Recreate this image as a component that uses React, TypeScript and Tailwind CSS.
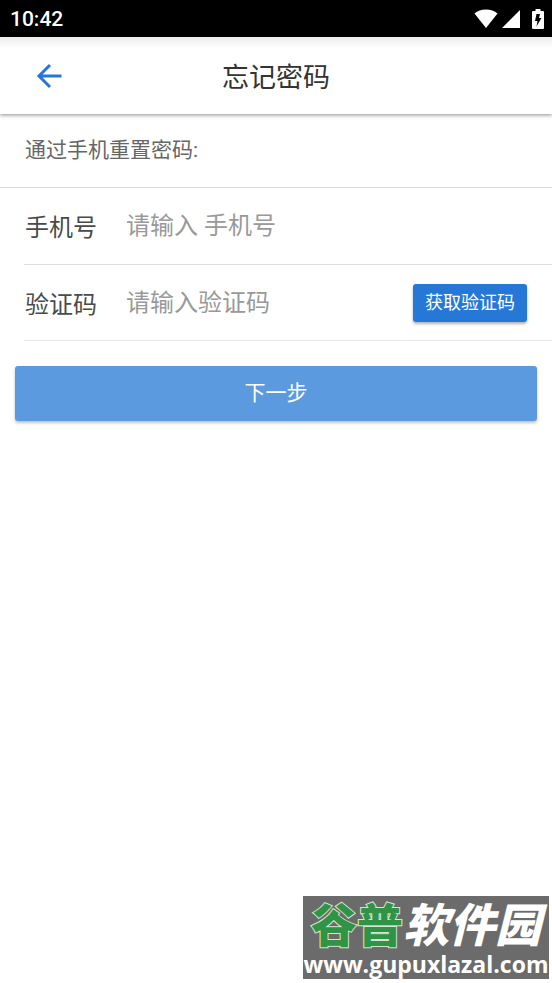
import { useState } from "react"

function StatusBar() {
  return (
    <div className="flex h-[37px] items-center justify-between bg-black pl-[10px] pr-2 text-white">
      <span className="pt-px font-[Roboto,sans-serif] text-[21px] leading-6 font-medium">10:42</span>

      <div className="flex items-center">
        <svg className="mr-1 h-[19px] w-6" viewBox="0 0 24 19" fill="currentColor" aria-hidden="true">
          <path d="M0.500 4.500C3.500 1.800 7.400 0.500 12 0.500s8.500 1.300 11.500 4L12 19z" />
        </svg>
        <svg className="mr-3 h-[18px] w-[18px]" viewBox="0 0 18 18" fill="currentColor" aria-hidden="true">
          <path d="M18 0v18H0z" />
        </svg>
        <svg className="h-5 w-3" viewBox="0 0 12 20" aria-hidden="true">
          <path fill="currentColor" d="M3.500 0h5v2H11a1 1 0 0 1 1 1v16a1 1 0 0 1-1 1H1a1 1 0 0 1-1-1V3a1 1 0 0 1 1-1h2.500z" />
          <path fill="#000" d="M4.500 5H8L7 9h2.500L4.500 17.500 5.500 12H3z" />
        </svg>
      </div>
    </div>
  )
}

function Header() {
  return (
    <header className="relative flex h-[77px] items-center justify-center bg-linear-to-b from-[#ececec] to-white to-15% shadow-[0_1px_4px_rgba(0,0,0,0.45)]">
      <button type="button" aria-label="返回" className="absolute left-9 text-[#2877d4]">
        <svg className="h-[26px] w-[26px]" viewBox="0 0 26 26" fill="none" stroke="currentColor" strokeWidth="3" aria-hidden="true">
          <path d="M25.500 13H3M14 2L3 13l11 11" />
        </svg>
      </button>
      <h1 className="pt-1 text-[27px] leading-9 text-[#333]">忘记密码</h1>
    </header>
  )
}

function Watermark() {
  return (
    <div className="fixed right-[3px] bottom-1 flex h-[83px] w-[246px] flex-col items-center overflow-hidden bg-[#6b6b6b] text-white">
      <p className="mt-2 text-[46px] leading-[44px] font-black whitespace-nowrap">
        <span className="text-[#2f9446] [-webkit-text-stroke:2px_#d5e5d5] [paint-order:stroke_fill]">谷普</span>
        <span className="italic">软件园</span>
      </p>
      <p className="mt-1 font-['Open_Sans',sans-serif] text-[23px] leading-6 font-bold whitespace-nowrap">
        www.gupuxlazal.com
      </p>
    </div>
  )
}

export default function App() {
  const [phone, setPhone] = useState("")
  const [code, setCode] = useState("")

  return (
    <div className="min-h-screen bg-white font-[Roboto,'Noto_Sans_CJK_SC',sans-serif]">
      <StatusBar />
      <Header />

      <main>
        <p className="border-b border-[#d9d9d9] pt-5 pb-[21px] pl-[25px] text-[21px] leading-8 text-[#666]">
          通过手机重置密码:
        </p>

        <form onSubmit={(e) => e.preventDefault()}>
          <div className="ml-6 flex h-[77px] items-center border-b border-[#dedede]">
            <label htmlFor="phone" className="w-[102px] shrink-0 pt-1 pl-px text-2xl text-[#4a4a4a]">
              手机号
            </label>
            <input
              id="phone"
              type="tel"
              value={phone}
              onChange={(e) => setPhone(e.target.value)}
              placeholder="请输入 手机号"
              className="min-w-0 flex-1 text-2xl text-[#4a4a4a] outline-none placeholder:text-[#999]"
            />
          </div>

          <div className="ml-6 flex h-[76px] items-center border-b border-[#e6e6e6] pr-[25px]">
            <label htmlFor="code" className="w-[102px] shrink-0 pt-1 pl-px text-2xl text-[#4a4a4a]">
              验证码
            </label>
            <input
              id="code"
              type="text"
              value={code}
              onChange={(e) => setCode(e.target.value)}
              placeholder="请输入验证码"
              className="min-w-0 flex-1 text-2xl text-[#4a4a4a] outline-none placeholder:text-[#999]"
            />
            <button
              type="button"
              className="h-[38px] shrink-0 rounded-[3px] bg-[#2678d6] px-3 text-lg text-white shadow-[0_2px_3px_rgba(0,0,0,0.3)]"
            >
              获取验证码
            </button>
          </div>

          <div className="px-[15px] pt-[25px]">
            <button
              type="submit"
              className="h-[55px] w-full rounded-[3px] bg-[#5c9ae0] text-[21px] text-white shadow-[0_2px_3px_rgba(0,0,0,0.25)]"
            >
              下一步
            </button>
          </div>
        </form>
      </main>

      <Watermark />
    </div>
  )
}
